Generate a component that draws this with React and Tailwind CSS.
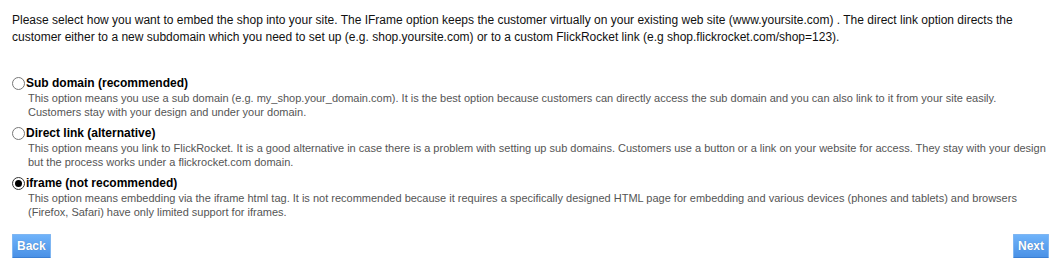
import { useState } from "react";

const OPTIONS = [
  {
    id: "subdomain",
    label: "Sub domain (recommended)",
    lines: [
      "This option means you use a sub domain (e.g. my_shop.your_domain.com). It is the best option because customers can directly access the sub domain and you can also link to it from your site easily.",
      "Customers stay with your design and under your domain.",
    ],
  },
  {
    id: "direct",
    label: "Direct link (alternative)",
    lines: [
      "This option means you link to FlickRocket. It is a good alternative in case there is a problem with setting up sub domains. Customers use a button or a link on your website for access. They stay with your design",
      "but the process works under a flickrocket.com domain.",
    ],
  },
  {
    id: "iframe",
    label: "iframe (not recommended)",
    lines: [
      "This option means embedding via the iframe html tag. It is not recommended because it requires a specifically designed HTML page for embedding and various devices (phones and tablets) and browsers",
      "(Firefox, Safari) have only limited support for iframes.",
    ],
  },
];

function Radio({ checked }) {
  return (
    <span
      className={`mt-[2px] mr-[1px] flex h-[13px] w-[13px] shrink-0 items-center justify-center rounded-full border bg-white ${
        checked ? "border-[#333]" : "border-[#777]"
      }`}
    >
      {checked && <span className="h-[7px] w-[7px] rounded-full bg-black" />}
    </span>
  );
}

function BlueButton({ children }) {
  return (
    <button className="h-[24px] rounded-[1px] border border-[#7fb6f2] border-b-[#3b7fd4] bg-gradient-to-b from-[#6fb3fa] to-[#4a91e6] px-[4px] text-[12px] font-bold leading-none text-white [text-shadow:0_0_1px_rgba(0,0,0,0.25)]">
      {children}
    </button>
  );
}

export default function App() {
  const [selected, setSelected] = useState("iframe");

  return (
    <div className="min-h-[280px] bg-white px-[12px] pt-[12px] font-['Liberation_Sans',Arial,sans-serif]">
      <p className="text-[12px] leading-[17px] text-[#111]">
        Please select how you want to embed the shop into your site. The IFrame option keeps the customer virtually on
        your existing web site (www.yoursite.com) . The direct link option directs the customer either to a new
        subdomain which you need to set up (e.g. shop.yoursite.com) or to a custom FlickRocket link (e.g
        shop.flickrocket.com/shop=123).
      </p>

      <div className="mt-[29px] flex flex-col gap-[6px]">
        {OPTIONS.map((opt) => (
          <div key={opt.id} onClick={() => setSelected(opt.id)} className="cursor-pointer">
            <div className="flex items-start">
              <Radio checked={selected === opt.id} />
              <span className="text-[12px] font-bold leading-[16px] text-black">{opt.label}</span>
            </div>
            <div className="pl-[16px] text-[11px] leading-[14px] text-[#555]">
              {opt.lines[0]}
              <br />
              {opt.lines[1]}
            </div>
          </div>
        ))}
      </div>

      <div className="mt-[15px] flex justify-between">
        <BlueButton>Back</BlueButton>
        <BlueButton>Next</BlueButton>
      </div>
    </div>
  );
}
